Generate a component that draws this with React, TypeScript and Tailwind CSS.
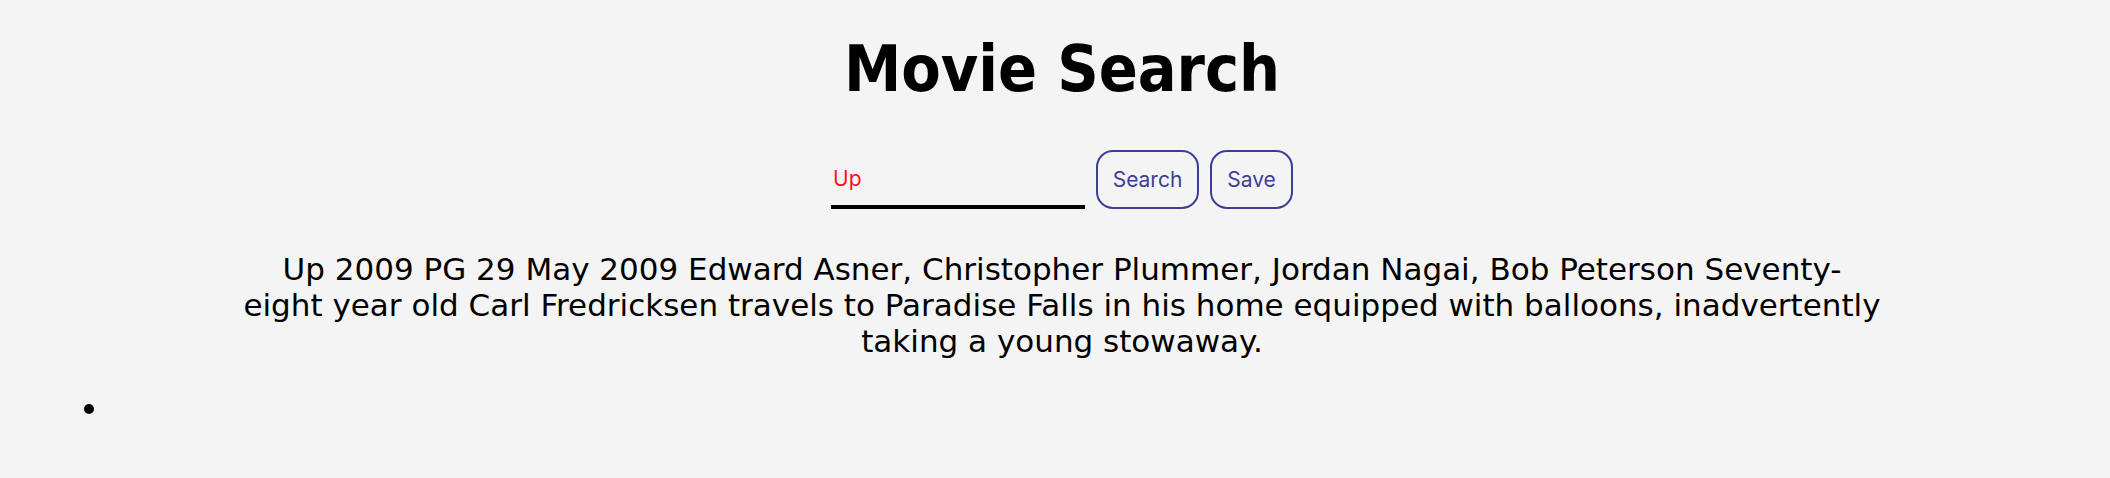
import React from "react";

export default function App() {
  return (
    <div className="min-h-screen bg-[#f4f4f4] pl-[14px] text-black font-['DejaVu_Sans_Condensed','DejaVu_Sans',sans-serif]">
      <h1 className="pt-[32px] text-center text-[64px] font-bold leading-[75px]">
        Movie Search
      </h1>
      <div className="mt-[43px] flex items-center justify-center gap-[11px]">
        <div className="flex h-[59px] w-[254px] items-end border-b-[4px] border-black pb-[14px] pl-[2px]">
          <input
            defaultValue="Up"
            className="w-full bg-transparent text-[21px] leading-[24px] text-[#ff1424] outline-none font-['Inter','Noto_Sans',sans-serif]"
          />
        </div>
        <button className="h-[59px] w-[103px] rounded-[17px] border-2 border-[#3b3f98] text-[21px] text-[#3b3f98] font-['Inter','Noto_Sans',sans-serif]">
          Search
        </button>
        <button className="h-[59px] w-[83px] rounded-[17px] border-2 border-[#3b3f98] text-[21px] text-[#3b3f98] font-['Inter','Noto_Sans',sans-serif]">
          Save
        </button>
      </div>
      <p className="mx-auto mt-[42px] w-[1680px] text-center text-[31px] leading-[36px] font-['DejaVu_Sans',sans-serif]">
        Up 2009 PG 29 May 2009 Edward Asner, Christopher Plummer, Jordan Nagai, Bob Peterson Seventy-
        <br />
        eight year old Carl Fredricksen travels to Paradise Falls in his home equipped with balloons, inadvertently taking a young stowaway.
      </p>
      <ul className="mt-[31px] list-disc pl-[97px] text-[32px] leading-[37px]">
        <li className="h-[37px]"></li>
      </ul>
    </div>
  );
}
